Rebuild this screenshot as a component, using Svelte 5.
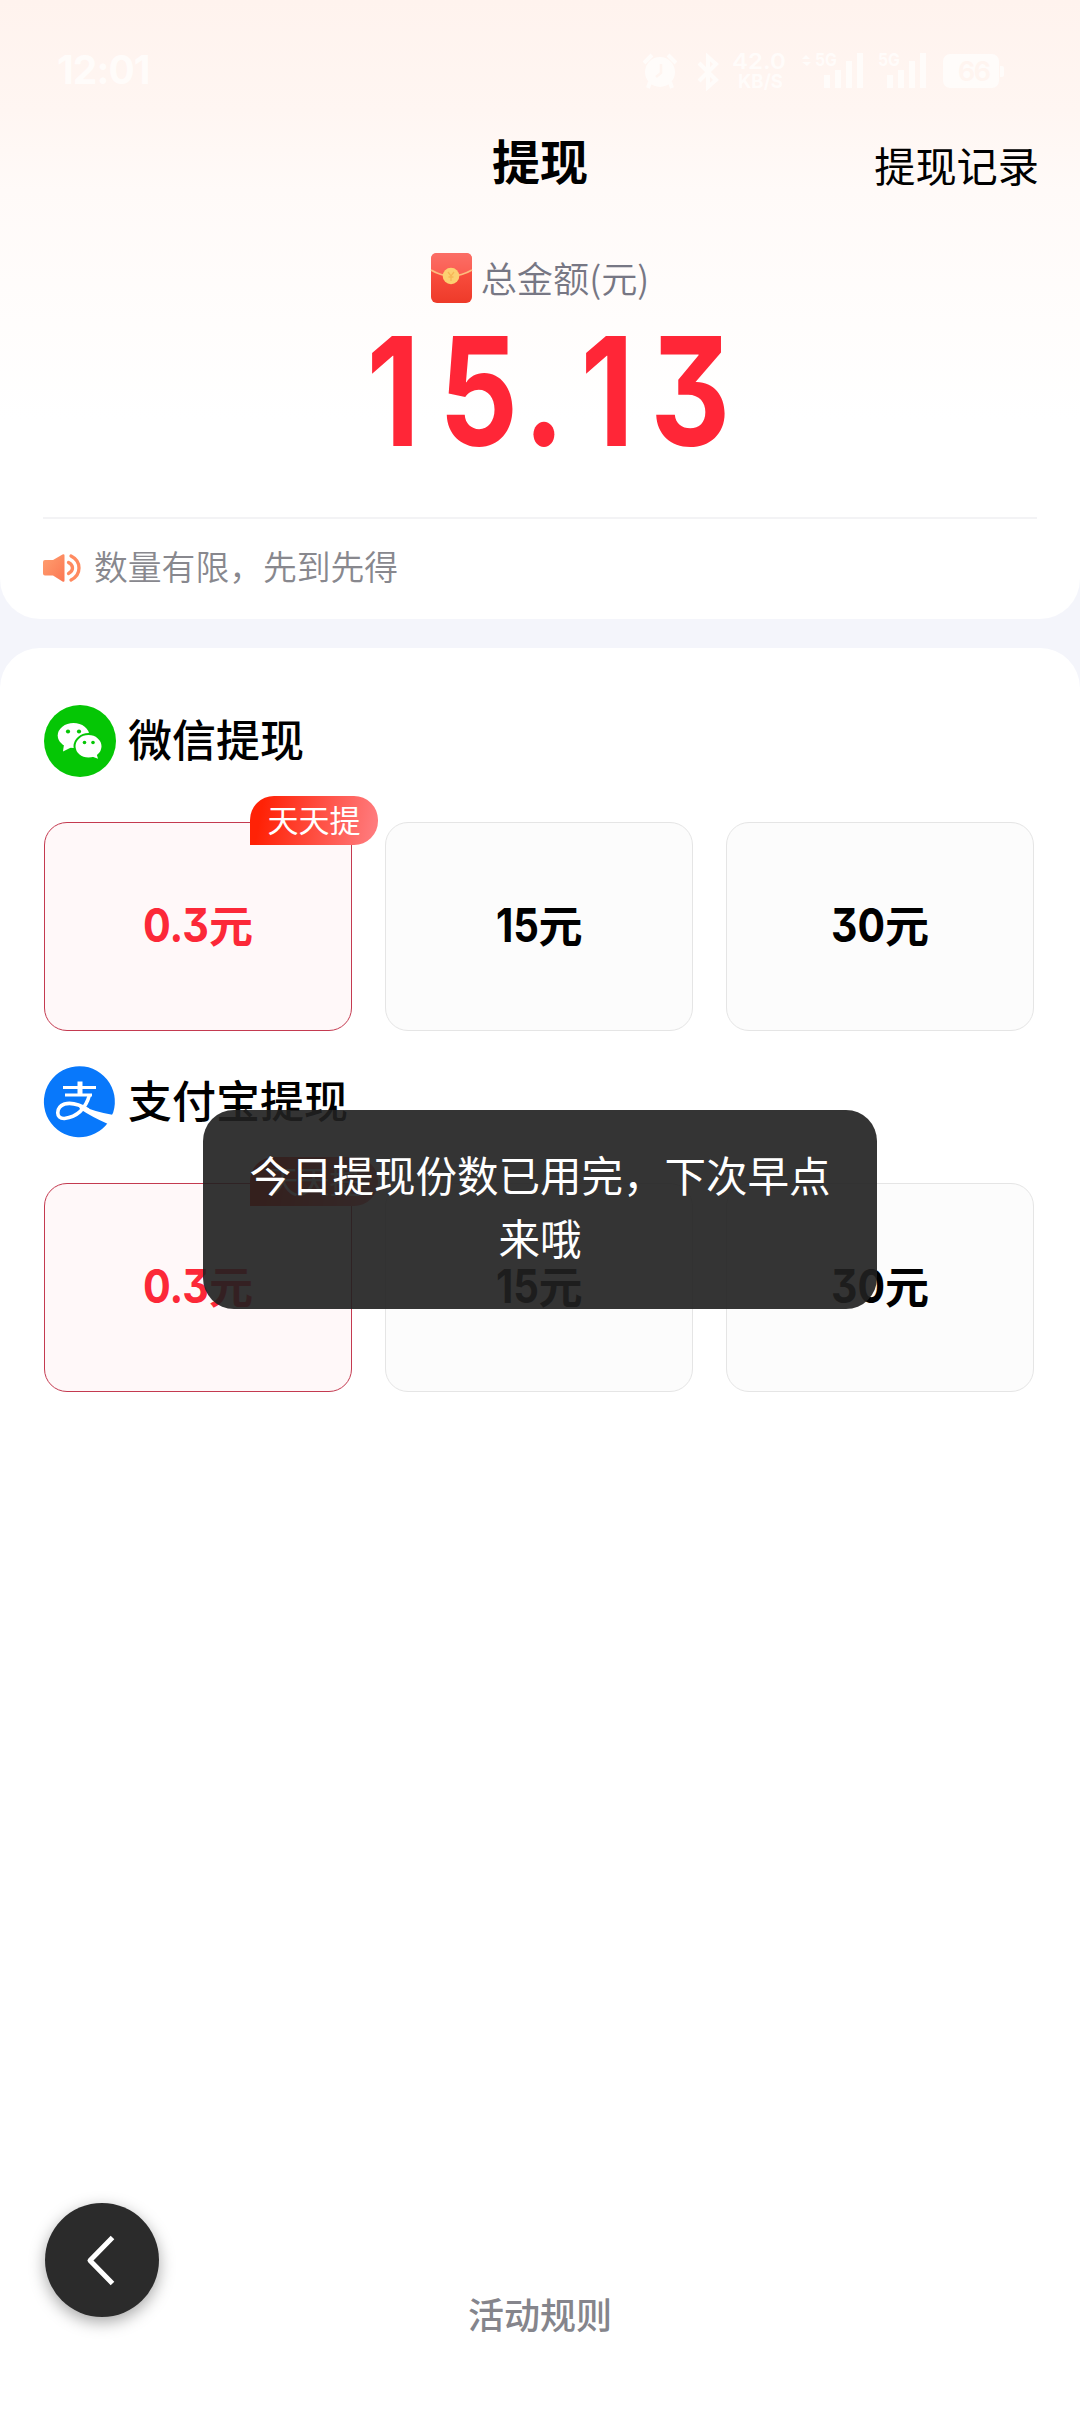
<script>
  const methods = [
    { id: 'wechat', name: '微信提现' },
    { id: 'alipay', name: '支付宝提现' }
  ];
  // width: advance of the condensed digits, in pixels
  const amounts = [
    { value: '0.3', width: 66 },
    { value: '15', width: 43 },
    { value: '30', width: 54 }
  ];
</script>

<div class="page">
  <section class="summary">
    <div class="status">
      <span class="time">12:01</span>
      <svg class="tray" width="400" height="60" viewBox="0 0 400 60" fill="#fffefd">
        <circle cx="30" cy="32" r="15" />
        <path d="M14 23l8-8M38 15l8 8" stroke="#fffefd" stroke-width="4" />
        <path d="M20 42l-2 6M40 42l2 6" stroke="#fffefd" stroke-width="4" />
        <path d="M31 24v9l-5 4" stroke="#fff5f0" stroke-width="2.5" fill="none" />
        <path d="M69 23l17 17-8 7V17l8 7-17 17" stroke="#fffefd" stroke-width="4" fill="none" />
        <text x="102" y="29" font-size="22" font-weight="600" textLength="54" lengthAdjust="spacingAndGlyphs">42.0</text>
        <text x="108" y="48" font-size="19" font-weight="700" textLength="45" lengthAdjust="spacingAndGlyphs">KB/S</text>
        <path d="M172 19l4-4 4 4zM172 22h9l-4 4z" />
        <text x="185" y="26" font-size="18" font-weight="700" textLength="22" lengthAdjust="spacingAndGlyphs">5G</text>
        <path d="M194 35h6v13h-6zM205 30h6v18h-6zM216 21h6v27h-6zM227 13h6v35h-6z" />
        <text x="248" y="26" font-size="18" font-weight="700" textLength="22" lengthAdjust="spacingAndGlyphs">5G</text>
        <path d="M257 35h6v13h-6zM268 30h6v18h-6zM279 21h6v27h-6zM290 13h6v35h-6z" />
        <rect x="313" y="14" width="56" height="34" rx="7" />
        <path d="M370 26h2q2 0 2 2v7q0 2-2 2h-2z" />
        <text class="level" x="328" y="41" font-size="27" font-weight="600" textLength="33">66</text>
      </svg>
    </div>

    <header class="nav">
      <h1>提现</h1>
      <span class="history">提现记录</span>
    </header>

    <div class="total-label">
      <svg width="41" height="50" viewBox="0 0 41 50">
        <defs>
          <linearGradient id="env" x1="0" y1="0" x2="0" y2="1">
            <stop offset="0" stop-color="#ff5a4c" /><stop offset="1" stop-color="#ee3a29" />
          </linearGradient>
          <linearGradient id="flap" x1="0" y1="0" x2="0" y2="1">
            <stop offset="0" stop-color="#fb6e66" /><stop offset="1" stop-color="#fb5c50" />
          </linearGradient>
        </defs>
        <rect width="41" height="50" rx="6" fill="url(#env)" />
        <path d="M0 17V6q0-6 6-6h29q6 0 6 6v11q-20 12-41 0z" fill="url(#flap)" />
        <path d="M0 17q20 12 41 0" fill="none" stroke="#fdbb7d" stroke-width="2" />
        <circle cx="20" cy="23" r="8.3" fill="#fcd071" />
        <path d="M17 19l3 4 3-4M20 23v5M17.500 24h5" fill="none" stroke="#f6b757" stroke-width="1.300" />
      </svg>
      <span>总金额(元)</span>
    </div>
    <svg class="total" width="400" height="214" viewBox="340 303 400 214">
      <text transform="scale(.82 1)" x="447 535.5 638 708 793" y="446">15.13</text>
    </svg>

    <div class="notice">
      <svg width="38" height="28" viewBox="0 0 38 28">
        <defs>
          <linearGradient id="horn" x1="0" y1="0" x2="1" y2="1">
            <stop offset="0" stop-color="#ffa070" /><stop offset="1" stop-color="#fb7652" />
          </linearGradient>
        </defs>
        <path d="M2 6h8L19.500.6q2-1 2 1v24.800q0 2-2 1L10 21.500H2q-2 0-2-2V8q0-2 2-2z" fill="url(#horn)" />
        <path d="M25.500 8.500q4 2 4 5.500t-4 5.500M28 2q8 4 8 12t-8 12" fill="none" stroke="#ff8a60" stroke-width="3.300" stroke-linecap="round" />
      </svg>
      <span>数量有限，先到先得</span>
    </div>
  </section>

  <main>
    {#each methods as method (method.id)}
      <section class="method">
        <h2>
          {#if method.id === 'wechat'}
            <svg width="72" height="72" viewBox="0 0 72 72">
              <circle cx="36" cy="36" r="36" fill="#05c605" />
              <ellipse cx="29.500" cy="30.500" rx="15.800" ry="12.500" fill="#fff" />
              <path d="M20 39l-1 7.500 8-4z" fill="#fff" />
              <ellipse cx="44.500" cy="41.300" rx="14" ry="12.200" fill="#fff" stroke="#05c605" stroke-width="2" />
              <path d="M48 51.500l6 2.300-1.500-5z" fill="#fff" />
              <g fill="#05c605"><circle cx="24" cy="26.500" r="2.100" /><circle cx="35" cy="26.500" r="2.100" /><circle cx="40.500" cy="37.500" r="1.800" /><circle cx="49" cy="37.500" r="1.800" /></g>
            </svg>
          {:else}
            <svg width="72" height="72" viewBox="0 0 72 72">
              <path d="M64.300 56.300A35.500 35.500 0 1 1 69.200 46.500z" fill="#0878fb" />
              <path d="M19 21.500h33M21 29h27" fill="none" stroke="#fff" stroke-width="3" />
              <path d="M36 15.500v13" fill="none" stroke="#fff" stroke-width="5" />
              <path d="M45.500 29q-6 21-25 23.500c-9 .5-9-11 0-14.500 8-2 16 1 24 6" fill="none" stroke="#fff" stroke-width="3.600" />
              <path d="M34 38.500Q51 46 69.500 49L64 58Q48 51 36 43z" fill="#fff" />
            </svg>
          {/if}
          <span>{method.name}</span>
        </h2>
        <div class="amounts">
          {#each amounts as amount, i}
            <div class="amount" class:selected={i === 0}>
              <svg class="num" width={amount.width} height="60">
                <text x="0" y="45" textLength={amount.width} lengthAdjust="spacingAndGlyphs">{amount.value}</text>
              </svg>
              <span class="unit">元</span>
              {#if i === 0}<span class="badge">天天提</span>{/if}
            </div>
          {/each}
        </div>
      </section>
    {/each}
  </main>

  <footer>活动规则</footer>

  <div class="back">
    <svg width="114" height="114" viewBox="0 0 114 114">
      <path d="M67.500 34.500L45 57.500l22.500 23" fill="none" stroke="#fff" stroke-width="5" stroke-linejoin="round" />
    </svg>
  </div>
  <div class="toast">今日提现份数已用完，下次早点来哦</div>
</div>

<style>
  :global(body) { margin: 0; background: #fff; }
  .page {
    position: relative;
    display: flex;
    flex-direction: column;
    width: 1080px;
    height: 2412px;
    overflow: hidden;
    background: #f4f5fb;
    font-family: 'Noto Sans CJK SC', sans-serif;
    color: #000;
  }
  svg { display: block; flex: none; overflow: visible; }
  .summary {
    box-sizing: border-box;
    height: 619px;
    flex: none;
    border-radius: 0 0 40px 40px;
    background: linear-gradient(#fff3ee 0, #fff6f2 110px, #fffaf8 190px, #fff 420px);
  }
  .status {
    display: flex;
    justify-content: space-between;
    height: 60px;
    padding: 40px 50px 0 57px;
    font-family: Inter, sans-serif;
  }
  .tray, .time { opacity: .8; }
  .level { fill: #fff5f0; }
  .time { font-size: 39px; font-weight: 700; line-height: 60px; color: #fffefd; letter-spacing: -1px; }
  .nav {
    display: grid;
    grid-template-columns: 1fr auto 1fr;
    height: 118px;
    padding: 0 41px 6px;
    align-items: center;
  }
  h1 { grid-column: 2; margin: 0; font-size: 48px; line-height: 60px; font-weight: 700; }
  .history { justify-self: end; font-size: 41.200px; line-height: 60px; margin-top: 10px; }
  .total-label {
    display: flex;
    justify-content: center;
    align-items: center;
    gap: 9px;
    height: 50px;
    margin-top: 29px;
    font-size: 36.200px;
    color: #777784;
    font-weight: 350;
  }
  .total-label span { line-height: 50px; padding-bottom: 2px; }
  .total {
    margin: 0 auto;
    font-family: Inter, sans-serif;
    font-size: 151px;
    font-weight: 650;
    fill: #ff2637;
    font-feature-settings: 'cv09';
  }
  .notice {
    display: flex;
    align-items: center;
    gap: 13px;
    height: 97px;
    padding-bottom: 4px;
    margin: 0 43px;
    border-top: 2px solid #f3f3f5;
    font-size: 33.800px;
    color: #88888e;
    font-weight: 350;
  }
  .notice span { line-height: 48px; padding-bottom: 3px; }
  main {
    flex: 1;
    margin-top: 29px;
    padding: 57px 44px 0;
    border-radius: 40px 40px 0 0;
    background: #fff;
  }
  .method { height: 361px; }
  h2 {
    display: flex;
    align-items: center;
    gap: 12px;
    height: 72px;
    margin: 0;
    font-size: 44px;
    font-weight: 500;
  }
  h2 span { line-height: 66px; padding-bottom: 6px; }
  .amounts {
    display: grid;
    grid-template-columns: repeat(3, 308px);
    column-gap: 33px;
    margin-top: 45px;
  }
  .amount {
    position: relative;
    box-sizing: border-box;
    height: 209px;
    display: flex;
    align-items: center;
    justify-content: center;
    border: 1px solid #e5e5e5;
    border-radius: 23px;
    background: #fcfcfc;
    font-size: 44px;
    font-weight: 700;
  }
  .selected { border-color: #c43a50; background: #fff8f9; color: #fc2838; }
  .unit { line-height: 60px; padding-bottom: 6px; }
  .num {
    fill: currentColor;
    font-family: Inter, sans-serif;
    font-size: 46px;
    font-weight: 650;
    font-feature-settings: 'cv09';
  }
  .badge {
    position: absolute;
    top: -27px;
    right: -27px;
    width: 128px;
    height: 49px;
    border-radius: 24px 24px 24px 0;
    background: linear-gradient(100deg, #ff2206 10%, #ff7a7c 95%);
    color: #fff;
    font-size: 31px;
    font-weight: 400;
    line-height: 46px;
    text-align: center;
  }
  footer {
    height: 131px;
    background: #fff;
    text-align: center;
    font-size: 36px;
    line-height: 64px;
    font-weight: 500;
    color: #85858c;
  }
  .back {
    position: absolute;
    left: 45px;
    top: 2203px;
    border-radius: 50%;
    background: #2b2b2b;
    box-shadow: 0 5px 16px rgba(0, 0, 0, .35);
  }
  .toast {
    position: absolute;
    left: 203px;
    top: 1110px;
    width: 674px;
    height: 199px;
    box-sizing: border-box;
    padding: 33px 46px;
    border-radius: 31px;
    background: rgba(32, 32, 32, .91);
    color: #fff;
    font-size: 41.500px;
    line-height: 62.500px;
    text-align: center;
  }
</style>
